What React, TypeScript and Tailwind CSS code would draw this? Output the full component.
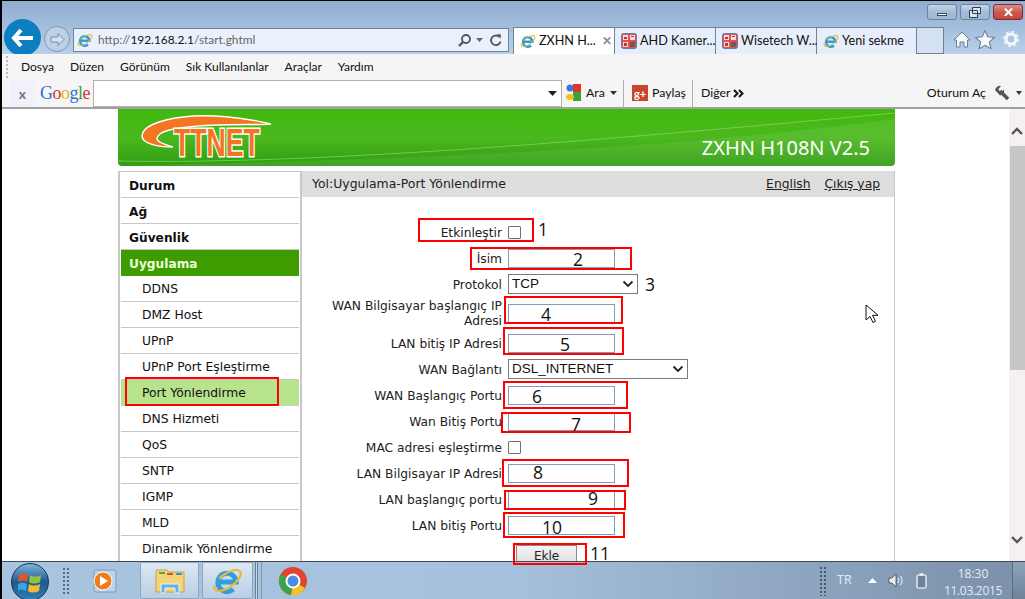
import React from "react";

const IeIcon = ({ size = 16 }: { size?: number }) => (
  <svg width={size} height={size} viewBox="0 0 32 32" className="shrink-0">
    <path d="M7 17.500h18a9.500 9.500 0 1 0-3 7.500" fill="none" stroke="#2f9fdc" strokeWidth="5" />
    <ellipse cx="16" cy="16" rx="16" ry="7" transform="rotate(-35 16 16)" fill="none" stroke="#f2b632" strokeWidth="2.200" strokeDasharray="42 8 30" />
  </svg>
);

const RedIcon = () => (
  <svg width="16" height="16" viewBox="0 0 16 16" className="shrink-0">
    <rect x="0.500" y="0.500" width="15" height="15" rx="2" fill="#e25050" stroke="#5f7ea8" />
    <rect x="2" y="2" width="5" height="5" fill="#f7dcdc" />
    <rect x="9" y="2" width="5" height="5" fill="#f7dcdc" />
    <rect x="2" y="9" width="5" height="5" fill="#f7dcdc" />
    <rect x="9" y="9" width="5" height="5" fill="#6e5a58" />
    <path d="M3 4h3v2H3zM10 3h3v1h-3zM3 10h3v3H3z" fill="#c9302f" />
  </svg>
);

const Tab = ({ icon, label, active, close, w }: { icon: React.ReactNode; label: string; active?: boolean; close?: boolean; w: string }) => (
  <div className={`flex h-[26px] items-center gap-[3px] border-r border-[#6f8296] pl-[6px] text-[12.600px] text-[#111] ${w} ${active ? "bg-white" : "bg-[#e6eefb]"}`}>
    {icon}
    <span className="whitespace-nowrap">{label}</span>
    {close && <span className="ml-[3px] text-[12px] font-bold leading-none text-[#8f8f8f]">✕</span>}
  </div>
);

const WinBtn = ({ kind }: { kind: "min" | "max" | "close" }) => (
  <div className={`flex h-[16px] w-[30px] items-center justify-center rounded-[3px] border ${kind === "close" ? "border-[#7d2c33] bg-gradient-to-b from-[#d9908c] via-[#c85a52] to-[#c9423a]" : "border-[#6e8298] bg-gradient-to-b from-[#c3d6ea] via-[#a4bdd8] to-[#9db8d3]"}`}>
    {kind === "min" && <div className="mt-[5px] h-[3px] w-[10px] border border-[#3b4b5e] bg-white" />}
    {kind === "max" && (
      <svg width="12" height="11" viewBox="0 0 12 11"><path d="M3.500.500h8v6h-8zM.500 3.500h8v7h-8z" fill="#dbe6f2" stroke="#2f3d4e" /></svg>
    )}
    {kind === "close" && <span className="text-[13px] font-bold leading-none text-white">✕</span>}
  </div>
);

const Red = ({ x, y, w, h }: { x: number; y: number; w: number; h: number }) => (
  <div className="absolute border-[2px] border-[#ff0000]" style={{ left: x, top: y, width: w, height: h }} />
);

const Num = ({ x, y, n }: { x: number; y: number; n: string }) => (
  <div className="absolute font-['Open_Sans'] text-[17.500px] leading-[20px] text-[#111]" style={{ left: x, top: y }}>{n}</div>
);

const TextInput = () => <div className="h-[19px] w-[107px] border border-[#7f9db9] bg-white" />;
const Check = () => <div className="h-[13px] w-[13px] rounded-[1px] border border-[#707070] bg-white" />;
const Select = ({ w, label }: { w: string; label: string }) => (
  <div className={`flex h-[20px] ${w} items-center justify-between border border-[#7a7a7a] bg-white pl-[3px] pr-[3px] font-['Liberation_Sans'] text-[13.500px] text-[#111]`}>
    <span>{label}</span>
    <svg width="12" height="8" viewBox="0 0 12 8"><path d="M1.500 1.500 6 6l4.500-4.500" fill="none" stroke="#222" strokeWidth="1.800" /></svg>
  </div>
);

const Row = ({ label, tall, children }: { label: React.ReactNode; tall?: boolean; children: React.ReactNode }) => (
  <div className={`flex items-center ${tall ? "h-[33px]" : "h-[26px]"}`}>
    <div className={`w-[200px] text-right leading-[15px] text-[#222] ${tall ? "" : "pt-[2px]"}`}>{label}</div>
    <div className="ml-[6px] flex items-center">{children}</div>
  </div>
);

const subItems = ["DDNS", "DMZ Host", "UPnP", "UPnP Port Eşleştirme", "Port Yönlendirme", "DNS Hizmeti", "QoS", "SNTP", "IGMP", "MLD", "Dinamik Yönlendirme"];

export default function App() {
  return (
    <div className="relative flex h-[599px] w-[1025px] flex-col overflow-hidden border-l-[2px] border-t border-black bg-white font-['Lato'] text-[12px]">
      {/* Browser title + tabs */}
      <div className="h-[53px] shrink-0 overflow-hidden bg-gradient-to-b from-[#8fadd0] to-[#b9d0ea]">
        <div className="flex h-[26px] justify-end gap-[3px] pr-[2px] pt-[3px]">
          <WinBtn kind="min" />
          <WinBtn kind="max" />
          <WinBtn kind="close" />
        </div>
        <div className="flex h-[27px]">
          <div className="flex h-[27px] w-[510px] shrink-0 items-start">
            <div className="relative z-10 ml-[2px] -mt-[8px] flex h-[37px] w-[37px] shrink-0 items-center justify-center rounded-full bg-[#0c7fc0]">
              <svg width="24" height="20" viewBox="0 0 24 20"><path d="M10 2 3 10l7 8M3 10h19" fill="none" stroke="#fff" strokeWidth="4" /></svg>
            </div>
            <div className="-mt-[1px] ml-[3px] flex h-[26px] w-[26px] shrink-0 items-center justify-center rounded-full border border-[#7f98b3] bg-[#bcd0e8]">
              <svg width="17" height="15" viewBox="0 0 17 15"><path d="M9 1.500 15 7.500l-6 6v-3.500H2V5h7Z" fill="#d4e1f0" stroke="#7a8fa6" /></svg>
            </div>
            <div className="ml-[3px] mt-[1px] flex h-[24px] w-[436px] items-center border border-[#6f8296] bg-[#eaf1fd] pl-[3px] pr-[5px] text-[11.900px] text-[#666]">
              <IeIcon />
              <span className="ml-[5px]">http://<span className="text-[#111]">192.168.2.1</span>/start.ghtml</span>
              <div className="ml-auto flex items-center gap-[4px]">
                <svg width="15" height="15" viewBox="0 0 15 15"><circle cx="9" cy="6" r="4" fill="none" stroke="#555" strokeWidth="1.800" /><path d="m6 9-4 4" stroke="#555" strokeWidth="2.400" /></svg>
                <svg width="7" height="4" viewBox="0 0 7 4"><path d="M0 0h7L3.500 4z" fill="#666" /></svg>
                <svg width="14" height="14" viewBox="0 0 14 14" className="ml-[2px]"><path d="M11.500 8.500a4.800 4.800 0 1 1-1.500-4.800" fill="none" stroke="#555" strokeWidth="1.800" /><path d="M8.500 1 12 1.500 11.500 6z" fill="#555" /></svg>
              </div>
            </div>
          </div>
          <div className="ml-[1px] flex h-[27px] shrink-0 border-y border-l border-[#6f8296]">
            <Tab w="w-[101px]" active close icon={<IeIcon />} label="ZXHN H..." />
            <Tab w="w-[101px]" icon={<RedIcon />} label="AHD Kamer..." />
            <Tab w="w-[101px]" icon={<RedIcon />} label="Wisetech W..." />
            <Tab w="w-[100px]" icon={<IeIcon />} label="Yeni sekme" />
            <div className="w-[27px] border-r border-[#6f8296] bg-[#d4e1f3]" />
          </div>
          <div className="ml-[9px] flex h-[24px] items-center gap-[4px]">
            <svg width="18" height="17" viewBox="0 0 18 17"><path d="M9 1 1 9h2.500v7H7v-5h4v5h3.500V9H17Z" fill="#f7f9fc" stroke="#6b7f96" /></svg>
            <svg width="20" height="19" viewBox="0 0 18 17"><path d="m9 .5 2.500 5.500 6 .7-4.500 4 1.300 6L9 13.700 3.700 16.700 5 10.700.5 6.700l6-.7Z" fill="#f7f9fc" stroke="#6b7f96" /></svg>
            <svg width="18" height="18" viewBox="0 0 18 18" className="ml-[3px]"><circle cx="9" cy="9" r="5" fill="none" stroke="#f7f9fc" strokeWidth="3" /><circle cx="9" cy="9" r="7" fill="none" stroke="#e8eef5" strokeWidth="2.400" strokeDasharray="3 2.500" /></svg>
          </div>
        </div>
      </div>

      {/* Menu bar */}
      <div className="flex h-[25px] shrink-0 items-center bg-[#f5f5f5] pl-[4px] text-[#111]">
        <div className="h-[22px] w-[2px] border-l-[2px] border-dotted border-[#bbb]" />
        <div className="ml-[13px] flex gap-[16px]">
          <span>Dosya</span><span>Düzen</span><span>Görünüm</span><span>Sık Kullanılanlar</span><span>Araçlar</span><span>Yardım</span>
        </div>
      </div>

      {/* Google toolbar */}
      <div className="flex h-[30px] shrink-0 items-center border-b-[2px] border-[#a0a0a0] bg-[#f5f5f5] text-[12.300px] text-[#111]">
        <div className="ml-[8px] flex h-[28px] w-[25px] items-center justify-center bg-[#f1f1fb] text-[14px] font-bold text-[#777]">x</div>
        <div className="ml-[5px] w-[53px] font-['Liberation_Serif'] text-[18px] leading-none tracking-[-0.500px]">
          <span className="text-[#2a6fd6]">G</span><span className="text-[#d8362a]">o</span><span className="text-[#e9b00f]">o</span><span className="text-[#2a6fd6]">g</span><span className="text-[#3da33d]">l</span><span className="text-[#d8362a]">e</span>
        </div>
        <div className="flex h-[27px] w-[469px] items-center justify-end border border-[#b0b0b0] bg-white pr-[4px]">
          <svg width="9" height="5" viewBox="0 0 9 5"><path d="M0 0h9L4.500 5z" fill="#222" /></svg>
        </div>
        <svg width="16" height="20" viewBox="0 0 16 20" className="ml-[4px]">
          <rect x="7" y="1" width="8" height="8" fill="#e0332c" /><circle cx="4" cy="5" r="3.500" fill="#3a78d8" />
          <rect x="7" y="9" width="8" height="9" fill="#3aa23a" /><ellipse cx="4" cy="14" rx="4" ry="3" fill="#f2c21a" />
        </svg>
        <span className="ml-[4px] w-[20px]">Ara</span>
        <svg width="7" height="4" viewBox="0 0 7 4" className="ml-[4px]"><path d="M0 0h7L3.500 4z" fill="#333" /></svg>
        <div className="ml-[6px] h-[27px] w-px bg-[#b0b0b0]" />
        <div className="ml-[8px] flex h-[16px] w-[16px] items-center justify-center bg-[#c8452f] text-[11px] font-bold leading-none text-white">g+</div>
        <span className="ml-[4px] w-[34px]">Paylaş</span>
        <div className="ml-[6px] h-[27px] w-px bg-[#b0b0b0]" />
        <span className="ml-[8px] w-[29px]">Diğer</span>
        <svg width="12" height="9" viewBox="0 0 12 9" className="ml-[3px]"><path d="m1 1 3.500 3.500L1 8M6 1l3.500 3.500L6 8" fill="none" stroke="#111" strokeWidth="2" /></svg>
        <span className="ml-auto">Oturum Aç</span>
        <svg width="16" height="16" viewBox="0 0 16 16" className="ml-[8px]">
          <path d="M6 6 14 14" stroke="#555" strokeWidth="3.500" />
          <path d="M1 5a5 5 0 0 1 6-4L4.500 4l1 2 2 1L10 4.500a5 5 0 0 1-4 6Z" fill="#555" />
        </svg>
        <svg width="6" height="4" viewBox="0 0 6 4" className="ml-[6px] mr-[3px]"><path d="M0 0h6L3 4z" fill="#333" /></svg>
      </div>

      {/* Page */}
      <div className="flex min-h-0 flex-1 overflow-hidden">
        <div className="flex-1 overflow-hidden pl-[116px] font-['DejaVu_Sans'] text-[12.300px]">
          <div className="w-[777px]">
            {/* Header */}
            <div className="relative flex h-[57px] items-end justify-end overflow-hidden rounded-b-[4px] bg-gradient-to-b from-[#41b80c] via-[#4bb81d] to-[#2f9c12] pb-[6px] pr-[25px]">
              <svg width="777" height="57" viewBox="0 0 777 57" className="absolute left-0 top-0" fill="none">
                <path d="M0 52C200 56 500 30 777 4" stroke="#8bd66a" strokeWidth="1" opacity=".7" />
                <path d="M0 57C250 50 520 45 777 10V57Z" fill="#fff" opacity=".08" />
                <path d="M153 15C125 8 90 5 65 8 40 11 24 18 24 27c0 7 14 11 31 11-10-3-19-6-15-11 4-7 30-10 60-11 20-1 40 0 53-1Z" fill="#f47521" stroke="#fff" strokeWidth="1.400" />
              </svg>
              <span className="absolute left-[56px] top-[15px] origin-left scale-x-[0.7] font-['Liberation_Sans'] text-[38px] font-bold leading-[38px] text-[#f47521] [-webkit-text-stroke:3px_#fff] [paint-order:stroke_fill]">TTNET</span>
              <span className="relative font-['Noto_Sans'] text-[20px] leading-[24px] text-white">ZXHN H108N V2.5</span>
            </div>

            {/* Body */}
            <div className="mt-[5px] flex">
              <div className="w-[184px] shrink-0 border-x-[2px] border-t-[1px] border-[#c8c8c8] px-[1px]">
                {["Durum", "Ağ", "Güvenlik"].map((s) => (
                  <div key={s} className="flex h-[26px] items-center border-b border-[#c8c8c8] pl-[8px] pt-[4px] text-[12.200px] font-bold text-[#111]">{s}</div>
                ))}
                <div className="flex h-[26px] items-center bg-[#3f9c00] pl-[8px] pt-[3px] text-[12.200px] font-bold text-[#e9ffd9]">Uygulama</div>
                {subItems.map((s) => (
                  <div key={s} className={`flex h-[26px] items-center border-b border-[#c8c8c8] pl-[21px] pt-[1px] text-[#111] ${s === "Port Yönlendirme" ? "bg-[#b7e38c]" : ""}`}>{s}</div>
                ))}
              </div>
              <div className="min-w-0 flex-1 border-r-[1px] border-[#c8c8c8]">
                <div className="flex h-[26px] items-center justify-between bg-[#dedede] pl-[10px] pr-[14px] text-[12.450px] text-[#222]">
                  <span>Yol:Uygulama-Port Yönlendirme</span>
                  <span className="flex gap-[14px] text-[12.300px] underline">
                    <span>English</span><span>Çıkış yap</span>
                  </span>
                </div>
                <div className="pt-[22px] text-[12.250px]">
                  <Row label="Etkinleştir"><Check /></Row>
                  <Row label="İsim"><TextInput /></Row>
                  <Row label="Protokol"><Select w="w-[130px]" label="TCP" /></Row>
                  <Row tall label={<>WAN Bilgisayar başlangıç IP<br />Adresi</>}><TextInput /></Row>
                  <Row label="LAN bitiş IP Adresi"><TextInput /></Row>
                  <Row label="WAN Bağlantı"><Select w="w-[180px]" label="DSL_INTERNET" /></Row>
                  <Row label="WAN Başlangıç Portu"><TextInput /></Row>
                  <Row label="Wan Bitiş Portu"><TextInput /></Row>
                  <Row label="MAC adresi eşleştirme"><Check /></Row>
                  <Row label="LAN Bilgisayar IP Adresi"><TextInput /></Row>
                  <Row label="LAN başlangıç portu"><TextInput /></Row>
                  <Row label="LAN bitiş Portu"><TextInput /></Row>
                  <div className="pl-[214px] pt-[7px]">
                    <div className="flex h-[24px] w-[61px] justify-center border border-[#8a8a8a] bg-gradient-to-b from-[#f4f4f4] to-[#dcdcdc] pt-[1px] text-[12px] text-[#222]">Ekle</div>
                  </div>
                </div>
              </div>
            </div>
          </div>
        </div>
        {/* Scrollbar */}
        <div className="flex w-[16px] shrink-0 flex-col items-center bg-[#f5f0f3] pt-[18px]">
          <svg width="12" height="8" viewBox="0 0 12 8"><path d="m1 7 5-5 5 5" fill="none" stroke="#555" strokeWidth="2.400" /></svg>
          <div className="ml-[1px] mt-[11px] h-[224px] w-[15px] bg-[#c6c6c6]" />
          <svg width="12" height="8" viewBox="0 0 12 8" className="mb-[17px] mt-auto"><path d="m1 1 5 5 5-5" fill="none" stroke="#555" strokeWidth="2.400" /></svg>
        </div>
      </div>

      {/* Taskbar */}
      <div className="flex h-[38px] shrink-0 items-center border-t border-[#3c4a5a] bg-gradient-to-r from-[#a9c4df] via-[#a6c1dd] to-[#7b90a9]">
        <div className="relative ml-[9px] mt-[2px] flex h-[38px] w-[38px] shrink-0 items-center justify-center rounded-full border border-[#16334f] bg-gradient-to-b from-[#7fb4dc] via-[#1d5a8f] to-[#2f7fb5]">
          <svg width="24" height="22" viewBox="0 0 24 22">
            <path d="M1 4c3-2 6-2 9 0l-1 7c-3-2-6-2-9 0Z" fill="#e2552a" />
            <path d="M12 4c3 2 7 2 11 0l-1 7c-4 2-8 2-11 0Z" fill="#8cc63f" />
            <path d="M0 13c3-2 6-2 9 0l-1 7c-3-2-6-2-9 0Z" fill="#35a5e6" />
            <path d="M11 13c3 2 7 2 11 0l-1 7c-4 2-8 2-11 0Z" fill="#f5b82e" />
          </svg>
        </div>
        <div className="ml-[13px] h-[28px] w-[8px] bg-[radial-gradient(#5a6b7d_1px,transparent_1.500px)] bg-[length:4px_4px]" />
        <svg width="28" height="28" viewBox="0 0 28 28" className="ml-[21px]">
          <rect x="3" y="3" width="22" height="22" rx="2" fill="#b9d3ec" stroke="#7d9ab8" />
          <circle cx="12" cy="14" r="9" fill="#f07d1a" stroke="#fff" />
          <path d="M9 9l8 5-8 5z" fill="#fff" />
        </svg>
        <div className="ml-[21px] flex h-[37px] w-[59px] items-center justify-center rounded-[2px] border border-[#8fa6bf] bg-gradient-to-b from-[#dce8f4] to-[#b9cee4]">
          <svg width="32" height="28" viewBox="0 0 32 28">
            <path d="M2 3h11l2 2h15v20H2Z" fill="#f3d479" stroke="#c9a24a" />
            <path d="M5 5h6v2H5z" fill="#52a84a" /><path d="M13 6h6v2h-6z" fill="#d84b3a" /><path d="M22 6h6v2h-6z" fill="#3a8fd8" />
            <path d="M7 26v-9h18v9h-4v-5H11v5Z" fill="#5fb3e8" stroke="#e9f4fb" />
          </svg>
        </div>
        <div className="ml-[3px] flex h-[37px] w-[51px] items-center justify-center rounded-[2px] border border-[#8fa6bf] bg-gradient-to-b from-[#dce8f4] to-[#b9cee4]">
          <IeIcon size={31} />
        </div>
        <div className="ml-[2px] h-[37px] w-[3px] border-x border-[#6d8095] bg-[#c5d6e8]" />
        <div className="ml-[3px] h-[37px] w-px bg-[#8094aa]" />
        <svg width="30" height="30" viewBox="0 0 30 30" className="ml-[16px]">
          <circle cx="15" cy="15" r="14" fill="#e0452f" />
          <path d="M15 15 27 22A14 14 0 0 1 13 29Z" fill="#f4c421" />
          <path d="M15 15 13 29A14 14 0 0 1 3 8Z" fill="#3ea346" />
          <circle cx="15" cy="15" r="6.500" fill="#4a8ee0" stroke="#fff" strokeWidth="2" />
        </svg>
        <div className="ml-auto flex items-center text-[#e2ecf5]">
          <div className="h-[30px] w-[8px] bg-[radial-gradient(#4a5b6d_1px,transparent_1.500px)] bg-[length:4px_4px]" />
          <span className="ml-[10px] w-[15px] font-['Open_Sans'] text-[12.500px]">TR</span>
          <svg width="9" height="5" viewBox="0 0 9 5" className="ml-[16px]"><path d="M4.500 0 9 5H0z" fill="#fff" /></svg>
          <svg width="16" height="15" viewBox="0 0 16 15" className="ml-[11px]"><path d="M1 5h3l4-4v13l-4-4H1z" fill="#eee" stroke="#333" strokeWidth=".7" /><path d="M10 5c1 1.500 1 3.500 0 5M12.500 3c2 3 2 6 0 9" fill="none" stroke="#fff" /></svg>
          <svg width="11" height="16" viewBox="0 0 11 16" className="ml-[12px]"><rect x="1" y="2" width="9" height="13" rx="1.500" fill="#6f8298" stroke="#fff" strokeWidth="1.200" /><rect x="3.500" y="0.500" width="4" height="2" fill="#fff" /></svg>
          <div className="ml-[16px] mt-[2px] w-[60px] text-center font-['Open_Sans'] text-[12px] leading-[17px]">
            <div>18:30</div><div className="tracking-[-0.300px]">11.03.2015</div>
          </div>
          <div className="ml-[9px] h-[37px] w-[13px] border-l border-[#5b6b7d] bg-gradient-to-b from-[#8ca3ba] to-[#6f8499]" />
        </div>
      </div>

      {/* Annotations drawn over the screenshot */}
      <div className="absolute left-[-2px] top-[-1px] font-['DejaVu_Sans']">
        <Red x={125} y={377} w={154} h={29} />
        <Red x={418} y={218} w={116} h={24} />
        <Red x={470} y={247} w={162} h={23} />
        <Red x={504} y={296} w={119} h={28} />
        <Red x={503} y={327} w={121} h={28} />
        <Red x={503} y={381} w={125} h={28} />
        <Red x={501} y={412} w={130} h={21} />
        <Red x={502} y={459} w={127} h={28} />
        <Red x={504} y={490} w={122} h={20} />
        <Red x={503} y={512} w={122} h={26} />
        <Red x={513} y={543} w={74} h={22} />
        <Num x={538} y={219} n="1" />
        <Num x={573} y={249} n="2" />
        <Num x={645} y={274} n="3" />
        <Num x={541} y={304} n="4" />
        <Num x={560} y={334} n="5" />
        <Num x={532} y={386} n="6" />
        <Num x={571} y={414} n="7" />
        <Num x={533} y={462} n="8" />
        <Num x={588} y={488} n="9" />
        <Num x={542} y={517} n="10" />
        <Num x={590} y={543} n="11" />
        {/* Mouse cursor */}
        <svg width="14" height="20" viewBox="0 0 14 20" className="absolute left-[865px] top-[304px]"><path d="M1 1v15l4-3.500 3 6 2.500-1.200-3-6H13Z" fill="#fff" stroke="#111" /></svg>
      </div>
    </div>
  );
}
